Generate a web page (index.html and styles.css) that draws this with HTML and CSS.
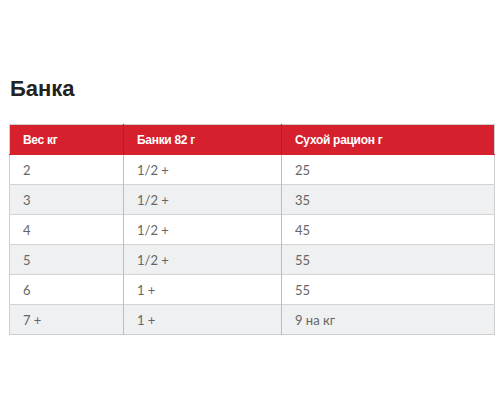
FILE: index.html
```html
<!DOCTYPE html>
<html lang="ru">
<head>
<meta charset="utf-8">
<title>Банка</title>
<link rel="stylesheet" href="styles.css">
</head>
<body>
<div class="page">
  <h1 class="title">Банка</h1>
  <table class="feed">
    <colgroup>
      <col class="c1"><col class="c2"><col class="c3">
    </colgroup>
    <thead>
      <tr><th>Вес кг</th><th>Банки 82 г</th><th>Сухой рацион г</th></tr>
    </thead>
    <tbody>
      <tr><td>2</td><td>1/2 +</td><td>25</td></tr>
      <tr><td>3</td><td>1/2 +</td><td>35</td></tr>
      <tr><td>4</td><td>1/2 +</td><td>45</td></tr>
      <tr><td>5</td><td>1/2 +</td><td>55</td></tr>
      <tr><td>6</td><td>1 +</td><td>55</td></tr>
      <tr><td>7 +</td><td>1 +</td><td>9 на кг</td></tr>
    </tbody>
  </table>
</div>
</body>
</html>
```
FILE: styles.css
```css
html, body {
  margin: 0;
  padding: 0;
  background: #ffffff;
}
.page {
  width: 500px;
  padding: 76px 0 0 9px;
  box-sizing: border-box;
}
.title {
  margin: 0 0 22px 1px;
  font-family: "Liberation Sans", Arial, sans-serif;
  font-weight: bold;
  font-size: 22px;
  line-height: 26px;
  color: #222222;
}
.feed {
  width: 485px;
  border-collapse: collapse;
  table-layout: fixed;
  font-family: Lato, "Open Sans", sans-serif;
  font-size: 13px;
  border: 1px solid #cfcfcf;
}
.c1 { width: 114px; }
.c2 { width: 158px; }
.c3 { width: 213px; }
.feed th {
  height: 30px;
  padding: 0 0 0 13px;
  box-sizing: border-box;
  background: #d7202e;
  color: #ffffff;
  font-family: "Liberation Sans", Arial, sans-serif;
  font-weight: bold;
  font-size: 12px;
  letter-spacing: -0.3px;
  text-align: left;
  border-left: 1px solid #b81a26;
  border-bottom: 1px solid #d7202e;
}
.feed th:first-child { border-left: none; }
.feed td {
  height: 30px;
  padding: 0 0 0 13px;
  box-sizing: border-box;
  color: #666666;
  border-top: 1px solid #d4d4d4;
  border-left: 1px solid #bdbdbd;
}
.feed tbody tr:first-child td { border-top: none; }
.feed td:first-child { border-left: none; }
.feed tbody tr:nth-child(even) td { background: #eef0f1; }
```
